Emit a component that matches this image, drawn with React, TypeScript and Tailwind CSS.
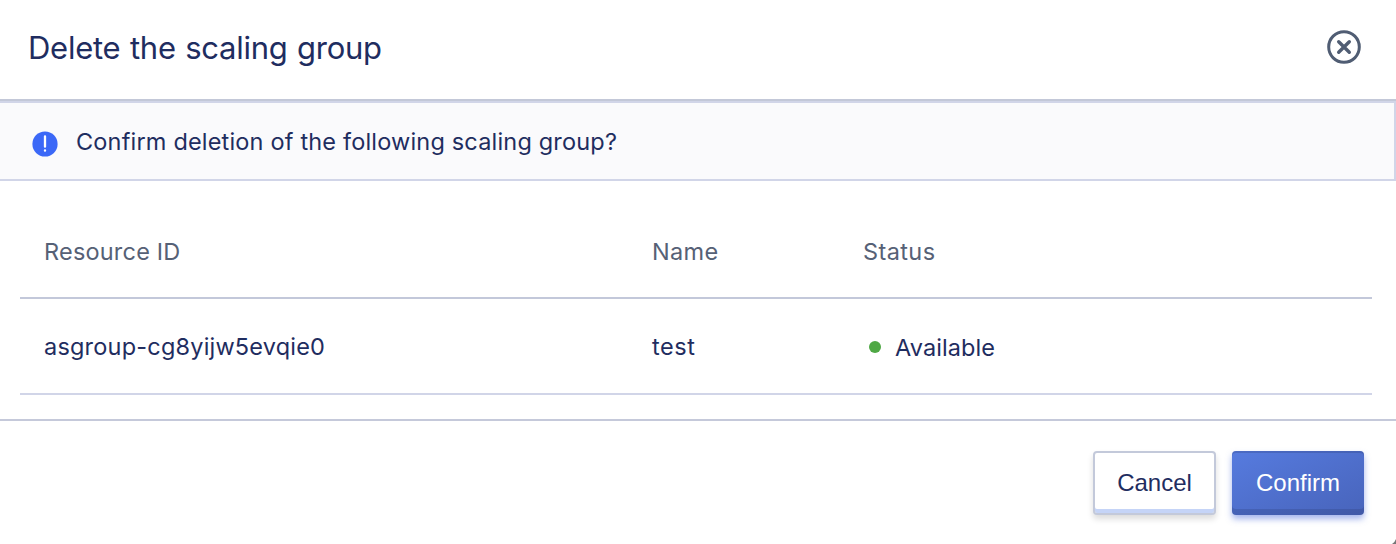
export default function App() {
  return (
    <div className="relative flex h-[544px] w-[1396px] flex-col overflow-hidden bg-white font-['Inter',sans-serif] text-[23.5px] text-[#1f2d60]">
      <header className="flex h-[99px] shrink-0 items-start justify-between pl-7 pr-[34px] pt-[29px]">
        <h1 className="text-[31px] leading-[38px] tracking-[-0.25px] [word-spacing:1px]">Delete the scaling group</h1>
        <svg width="36" height="36" viewBox="0 0 36 36" fill="none" stroke="#505d73" strokeWidth="3">
          <circle cx="18" cy="18" r="15.3" />
          <path d="M12.7 12.7l10.6 10.6M23.3 12.7l-10.6 10.6" strokeWidth="3.4" strokeLinecap="round" />
        </svg>
      </header>
      <section className="h-[82px] shrink-0 border-t-2 border-[#c3c8d8]">
        <div className="flex h-20 items-center border-y-2 border-r-2 border-[#d1d5e8] bg-[#fafafc] pl-8 pt-0.5">
          <svg className="mt-1" width="26" height="26" viewBox="0 0 26 26">
            <circle cx="13" cy="13" r="12.6" fill="#3b68f7" />
            <path d="M13 5.3v10.4M13 19.3v0.4" stroke="white" strokeWidth="2.3" strokeLinecap="round" />
          </svg>
          <p className="ml-[18px] tracking-[0.18px]">Confirm deletion of the following scaling group?</p>
        </div>
      </section>
      <main className="ml-5 mr-6 flex h-[238px] shrink-0 flex-col pt-6 tracking-[0.2px]">
        <div className="grid h-[94px] grid-cols-[608px_211px_1fr] items-center border-b-2 border-[#c3c8da] pl-6 pt-0.5 text-[#566176]">
          <span>Resource ID</span>
          <span className="tracking-[0.3px]">Name</span>
          <span className="tracking-[0.4px]">Status</span>
        </div>
        <div className="grid h-[96px] grid-cols-[608px_211px_1fr] items-center border-b-2 border-[#d1d5e8] pl-6 pt-0.5">
          <span>asgroup-cg8yijw5evqie0</span>
          <span className="tracking-[0.6px]">test</span>
          <span className="flex items-center gap-3.5 pl-1.5 tracking-[0.1px]">
            <i className="size-3 rounded-full bg-[#4fa845]" />
            <span className="pt-0.5">Available</span>
          </span>
        </div>
      </main>
      <footer className="flex flex-1 items-start justify-end gap-4 border-t-2 border-[#c5c9da] pr-8 pt-[30px] font-['Liberation_Sans',sans-serif] text-2xl">
        <button className="h-16 w-[123px] rounded border-2 border-[#c3c9da] bg-white shadow-[inset_0_-4px_0_#c5d4f7,0_4px_6px_rgba(0,0,0,0.14)]">Cancel</button>
        <button className="h-16 w-[132px] rounded bg-linear-to-br from-[#567bdf] to-[#4864bb] text-white shadow-[inset_0_2px_0_rgba(35,50,100,0.22),inset_0_-6px_0_rgba(35,50,100,0.22),0_4px_6px_rgba(75,108,220,0.5)]">Confirm</button>
      </footer>
      <svg className="absolute bottom-0 right-0" width="4" height="5" viewBox="0 0 4 5">
        <path d="M4 0v5H0Q3 3 4 0" fill="#777" />
      </svg>
    </div>
  );
}
